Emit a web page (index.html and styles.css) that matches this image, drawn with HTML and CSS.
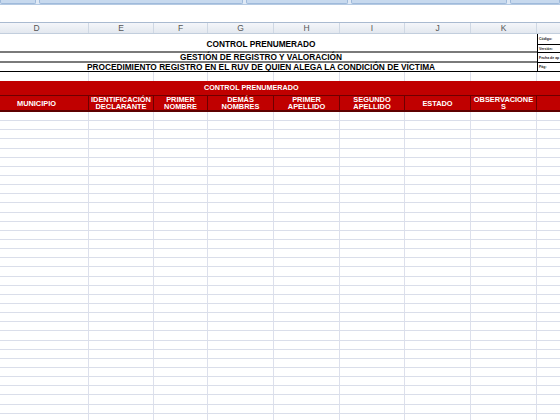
FILE: index.html
```html
<!DOCTYPE html>
<html>
<head>
<meta charset="utf-8">
<link rel="stylesheet" href="styles.css">
</head>
<body>
<div class="ribbon">
  <div class="tab t1"></div>
  <div class="tab t2"></div>
  <div class="tab t3"></div>
  <div class="tab t4"></div>
  <div class="tab t5"></div>
</div>
<div class="spacer"></div>
<div class="sheet">
  <div class="colhdr grid">
    <div>D</div><div>E</div><div>F</div><div>G</div><div>H</div><div>I</div><div>J</div><div>K</div><div></div>
  </div>
  <div class="title-block">
    <div class="titles">
      <div class="t-main">CONTROL PRENUMERADO</div>
      <div class="t-sub">GESTIÓN DE REGISTRO Y VALORACIÓN</div>
      <div class="t-proc">PROCEDIMIENTO REGISTRO EN EL RUV DE QUIEN ALEGA LA CONDICIÓN DE VÍCTIMA</div>
    </div>
    <div class="meta">
      <div class="m1">Código:</div>
      <div class="m2">Versión:</div>
      <div class="m3">Fecha de ap</div>
      <div class="m4">Pág:</div>
    </div>
  </div>
  <div class="r grid blank"><i></i><i></i><i></i><i></i><i></i><i></i><i></i><i></i><i></i></div>
  <div class="band"><span>CONTROL PRENUMERADO</span></div>
  <div class="hdr grid">
    <div>MUNICIPIO</div>
    <div>IDENTIFICACIÓN DECLARANTE</div>
    <div>PRIMER NOMBRE</div>
    <div>DEMÁS NOMBRES</div>
    <div>PRIMER APELLIDO</div>
    <div>SEGUNDO APELLIDO</div>
    <div>ESTADO</div>
    <div>OBSERVACIONE S</div>
    <div></div>
  </div>
  <div class="body">
    <div class="r grid"><i></i><i></i><i></i><i></i><i></i><i></i><i></i><i></i><i></i></div>
    <div class="r grid"><i></i><i></i><i></i><i></i><i></i><i></i><i></i><i></i><i></i></div>
    <div class="r grid"><i></i><i></i><i></i><i></i><i></i><i></i><i></i><i></i><i></i></div>
    <div class="r grid"><i></i><i></i><i></i><i></i><i></i><i></i><i></i><i></i><i></i></div>
    <div class="r grid"><i></i><i></i><i></i><i></i><i></i><i></i><i></i><i></i><i></i></div>
    <div class="r grid"><i></i><i></i><i></i><i></i><i></i><i></i><i></i><i></i><i></i></div>
    <div class="r grid"><i></i><i></i><i></i><i></i><i></i><i></i><i></i><i></i><i></i></div>
    <div class="r grid"><i></i><i></i><i></i><i></i><i></i><i></i><i></i><i></i><i></i></div>
    <div class="r grid"><i></i><i></i><i></i><i></i><i></i><i></i><i></i><i></i><i></i></div>
    <div class="r grid"><i></i><i></i><i></i><i></i><i></i><i></i><i></i><i></i><i></i></div>
    <div class="r grid"><i></i><i></i><i></i><i></i><i></i><i></i><i></i><i></i><i></i></div>
    <div class="r grid"><i></i><i></i><i></i><i></i><i></i><i></i><i></i><i></i><i></i></div>
    <div class="r grid"><i></i><i></i><i></i><i></i><i></i><i></i><i></i><i></i><i></i></div>
    <div class="r grid"><i></i><i></i><i></i><i></i><i></i><i></i><i></i><i></i><i></i></div>
    <div class="r grid"><i></i><i></i><i></i><i></i><i></i><i></i><i></i><i></i><i></i></div>
    <div class="r grid"><i></i><i></i><i></i><i></i><i></i><i></i><i></i><i></i><i></i></div>
    <div class="r grid"><i></i><i></i><i></i><i></i><i></i><i></i><i></i><i></i><i></i></div>
    <div class="r grid"><i></i><i></i><i></i><i></i><i></i><i></i><i></i><i></i><i></i></div>
    <div class="r grid"><i></i><i></i><i></i><i></i><i></i><i></i><i></i><i></i><i></i></div>
    <div class="r grid"><i></i><i></i><i></i><i></i><i></i><i></i><i></i><i></i><i></i></div>
    <div class="r grid"><i></i><i></i><i></i><i></i><i></i><i></i><i></i><i></i><i></i></div>
    <div class="r grid"><i></i><i></i><i></i><i></i><i></i><i></i><i></i><i></i><i></i></div>
    <div class="r grid"><i></i><i></i><i></i><i></i><i></i><i></i><i></i><i></i><i></i></div>
    <div class="r grid"><i></i><i></i><i></i><i></i><i></i><i></i><i></i><i></i><i></i></div>
    <div class="r grid"><i></i><i></i><i></i><i></i><i></i><i></i><i></i><i></i><i></i></div>
    <div class="r grid"><i></i><i></i><i></i><i></i><i></i><i></i><i></i><i></i><i></i></div>
    <div class="r grid"><i></i><i></i><i></i><i></i><i></i><i></i><i></i><i></i><i></i></div>
    <div class="r grid"><i></i><i></i><i></i><i></i><i></i><i></i><i></i><i></i><i></i></div>
    <div class="r grid"><i></i><i></i><i></i><i></i><i></i><i></i><i></i><i></i><i></i></div>
    <div class="r grid"><i></i><i></i><i></i><i></i><i></i><i></i><i></i><i></i><i></i></div>
    <div class="r grid"><i></i><i></i><i></i><i></i><i></i><i></i><i></i><i></i><i></i></div>
    <div class="r grid"><i></i><i></i><i></i><i></i><i></i><i></i><i></i><i></i><i></i></div>
    <div class="r grid"><i></i><i></i><i></i><i></i><i></i><i></i><i></i><i></i><i></i></div>
    <div class="r grid"><i></i><i></i><i></i><i></i><i></i><i></i><i></i><i></i><i></i></div>
    <div class="r grid"><i></i><i></i><i></i><i></i><i></i><i></i><i></i><i></i><i></i></div>
  </div>
</div>
</body>
</html>
```
FILE: styles.css
```css
* { box-sizing: border-box; }
html, body { margin: 0; padding: 0; }
body {
  width: 560px; height: 420px; overflow: hidden; background: #fff;
  font-family: "Liberation Sans", Arial, sans-serif;
}
.ribbon {
  height: 5px; display: flex; gap: 3px;
  background: #dfe9f5; border-bottom: 1px solid #b4c9e2;
}
.tab { height: 4px; background: #c7d9ee; border: 1px solid #9fbadb; border-top: none; border-radius: 0 0 2px 2px; }
.t1 { width: 36px; }
.t2 { width: 204px; }
.t3 { width: 102px; }
.t4 { width: 156px; }
.t5 { flex: 1; }
.spacer { height: 17px; }
.sheet { margin-left: -15px; width: 590px; }
.grid {
  display: grid;
  grid-template-columns: 104px 65px 54px 66px 66px 65px 66px 66px 38px;
}
.colhdr {
  height: 12px;
  background: linear-gradient(#f4f6fa, #e3e8ef);
  border-top: 1px solid #a9bad0;
  border-bottom: 1px solid #c2cedd;
  font-size: 8.5px; color: #555;
}
.colhdr div {
  text-align: center; line-height: 10px;
  border-right: 1px solid #cfd8e4;
}
.title-block {
  display: grid; grid-template-columns: 552px 38px;
  font-weight: bold; color: #000;
}
.titles { display: flex; flex-direction: column; }
.t-main {
  height: 19px; font-size: 8.3px; text-align: center; line-height: 18px;
  border-bottom: 2px solid #7a7a7a; padding-top: 1px;
}
.t-sub {
  height: 10px; font-size: 8.3px; text-align: center; line-height: 9px;
  border-bottom: 2px solid #7a7a7a;
}
.t-proc {
  height: 9px; font-size: 8.3px; text-align: center; line-height: 8px;
  border-bottom: 1px solid #000;
}
.meta {
  border-left: 1px solid #000; display: flex; flex-direction: column;
  font-size: 3.5px; font-weight: bold; color: #222;
}
.meta div { border-bottom: 1px solid #000; padding-left: 1px; display: flex; align-items: center; white-space: nowrap; }
.m1 { height: 11px; }
.m2 { height: 8px; }
.m3 { height: 10px; }
.m4 { height: 9px; }
.r { height: 9.15px; border-bottom: 1px solid #dadeea; }
.r i { border-right: 1px solid #dde0ec; }
.blank { height: 9px; border-bottom: none; }
.band {
  height: 15px; background: #c00000; color: #fff; border-bottom: 1px solid #6e0000;
  font-size: 7.2px; font-weight: bold; line-height: 14px;
  padding-left: 219px;
}
.hdr {
  height: 16px; background: #c00000; color: #fff;
  border-bottom: 2px solid #5e0000;
  font-size: 7.4px; font-weight: bold;
}
.hdr div {
  border-right: 1px solid #6e0000;
  display: flex; align-items: center; justify-content: center; text-align: center;
  line-height: 7px; padding: 0 2px;
}
```
